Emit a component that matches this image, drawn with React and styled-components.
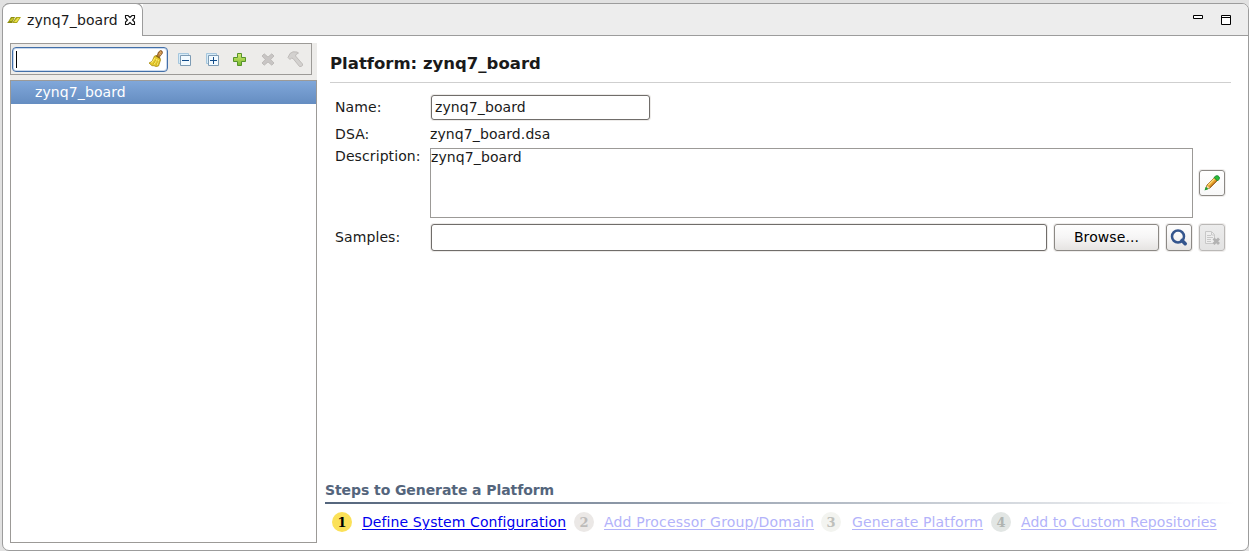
import React from "react";
import styled, { createGlobalStyle, css } from "styled-components";

const Global = createGlobalStyle`
  * { box-sizing: border-box; }
  html, body { margin: 0; padding: 0; overflow: hidden; }
  body { background: #e1e1e1; font-family: "DejaVu Sans", sans-serif; font-size: 14px; letter-spacing: 0.1px; color: #1a1a1a; }
`;

const Window = styled.div`
  width: 1249px; height: 551px; padding: 3px 0 0 2px; background: #e1e1e1;
`;
const Frame = styled.div`
  display: flex; flex-direction: column; width: 1247px; height: 548px;
  border: 1px solid #9c9c9c; border-radius: 7px; background: #fff;
`;
const TabBar = styled.header`display: flex; height: 32px; flex: none;`;
const Tab = styled.div`
  display: flex; align-items: center; width: 140px; height: 33px; margin-top: -1px;
  padding-left: 4px; background: #fff; border: 1px solid #9c9c9c; border-width: 1px 1px 0 0;
  border-radius: 7px 7px 0 0; white-space: nowrap;
  svg { flex: none; }
`;
const TabTitle = styled.span`width: 91px; margin: 0 6px 0 5px; line-height: 20px;`;
const TabFill = styled.div`
  display: flex; flex: 1; justify-content: flex-end; padding: 10px 16px 0 0; gap: 17px;
  background: #ededed; border-bottom: 1px solid #9c9c9c; border-top-right-radius: 6px;
`;
const Body = styled.div`display: flex; flex: 1; min-height: 0;`;

const Side = styled.aside`
  display: flex; flex-direction: column; flex: none; width: 307px; height: 500px;
  margin: 7px 0 0 7px; background: #edecea;
`;
const Toolbar = styled.div`
  display: flex; align-items: center; width: 302px; height: 32px; padding-left: 1px;
  border: 1px solid #9c9a97; margin-bottom: 5px; flex: none;
`;
const Tools = styled.div`
  display: flex; gap: 12px; margin-left: 8px;
  > svg { flex: none; }
  > svg:nth-child(3) { margin: 0 0 0 -1px; }
`;
const Filter = styled.div`
  display: flex; align-items: center; justify-content: space-between; flex: none; width: 156px; height: 25px;
  padding: 0 3px; background: #fff; border: 1px solid #426fa8; border-radius: 4px;
  box-shadow: inset 0 0 0 1px #c9d8ec;
`;
const Caret = styled.span`width: 1px; height: 17px; background: #000;`;
const Tree = styled.div`flex: 1; background: #fff; border: 1px solid #9c9a97;`;
const TreeRow = styled.div`
  height: 23px; padding-left: 24px; line-height: 22px; color: #fff;
  background: linear-gradient(#80a7da, #658dc1);
`;

const Main = styled.main`display: flex; flex-direction: column; flex: 1; padding: 7px 13px 0 8px;`;
const Title = styled.h1`
  height: 40px; margin: 0 4px 12px 5px; padding-top: 11px; border-bottom: 1px solid #cfcfcf;
  font-size: 16.5px; line-height: 20px; font-weight: bold; letter-spacing: 0; color: #1a1a1a;
`;
const Row = styled.div`
  display: flex; align-items: ${(p) => p.$align || "center"}; height: ${(p) => p.$h}px;
  margin: 0 0 ${(p) => p.$gap || 0}px 10px;
`;
const Label = styled.span`
  flex: none; width: 95px; line-height: 16px; padding-bottom: ${(p) => (p.$raised ? 2 : 0)}px;
`;
const Field = styled.div`
  flex: none; width: ${(p) => p.$w}px; height: ${(p) => p.$h}px; margin-left: 1px; padding-left: 3px;
  line-height: ${(p) => p.$h - 3}px; border: 1px solid #706d6a; border-radius: 3px; background: #fff;
  box-shadow: 0 0 0 1px #edebe9;
`;
const TextArea = styled.div`
  flex: none; width: 763px; height: 70px; border: 1px solid #9c9a97; line-height: 17px; background: #fff;
`;
const Button = styled.div`
  display: flex; align-items: center; justify-content: center; flex: none;
  width: ${(p) => p.$w}px; height: ${(p) => p.$h || 27}px; margin-left: ${(p) => p.$ml}px;
  color: #000; border: 1px solid #8c8985; border-radius: 3px;
  background: linear-gradient(#fefefe, #f6f5f5 50%, #e6e4e2);
  box-shadow: 0 0 0 1px #efedec;
  > span { padding-bottom: 2px; line-height: 16px; }
  ${(p) => p.$plain && css`background: linear-gradient(#fff, #f8f8f8); margin-top: 22px;`}
  ${(p) => p.$off && css`background: linear-gradient(#ececec, #e3e3e3); border-color: #bab8b6;`}
`;
const Steps = styled.section`margin-top: auto; height: 69px;`;
const StepsTitle = styled.h2`
  margin: 0; height: 21px; padding-top: 1px; font-size: 14px; line-height: 17px; letter-spacing: -0.08px; color: #54657c;
`;
const Rule = styled.div`height: 2px; background: linear-gradient(to right, #54657c, #fff);`;
const StepList = styled.div`display: flex; align-items: center; height: 20px; margin: 8px 0 0 7px;`;
const Badge = styled.span`
  flex: none; width: 20px; height: 20px; border-radius: 50%; margin-right: ${(p) => p.$mr}px;
  background: ${(p) => p.$bg}; color: ${(p) => p.$fg};
  font: bold 13px/21px "DejaVu Serif", serif; text-align: center;
`;
const Link = styled.a`
  flex: none; width: ${(p) => p.$w}px; margin-right: ${(p) => p.$mr}px; white-space: nowrap;
  letter-spacing: ${(p) => p.$ls}px;
  color: ${(p) => (p.$on ? "#0000ee" : "#b3b3fa")}; text-decoration: underline;
  text-underline-offset: 2px; text-decoration-thickness: 1px; line-height: 20px;
`;

const LogoIcon = () => (
  <svg width="15" height="8" viewBox="0 0 15 8">
    <path d="M4 1h4L5 7H0l1-1z" fill="#8c8c10" />
    <path d="M2 5l3-3h2L5 5z" fill="#c5c52a" />
    <path d="M9 1h5l-4 6H5z" fill="#a9a618" />
    <path d="M7 6l3.500-4h2l-3 4z" fill="#eee34d" />
  </svg>
);
const CloseIcon = () => (
  <svg width="12" height="12" viewBox="0 0 12 12">
    <path d="M1.500 1.500h2.500L6 3.500l2-2h2.500v2.500l-2 2 2 2v2.500H8l-2-2-2 2H1.500V8l2-2-2-2z" fill="#fff" stroke="#111" strokeWidth="1.100" />
  </svg>
);
const MinIcon = () => (
  <svg width="11" height="12" viewBox="0 0 11 12"><path d="M1.500 1.500h9v3h-9z" fill="#fff" stroke="#000" /></svg>
);
const MaxIcon = () => (
  <svg width="12" height="12" viewBox="0 0 12 12"><path d="M1.500 1.500h9v9h-9zM1.500 3.500h9" fill="#fff" stroke="#000" /></svg>
);
const BroomIcon = () => (
  <svg width="16" height="18" viewBox="0 0 16 18">
    <path d="M9 6l1.500-4 2-1.500L14 1l.5 2-1.500 2-2 2.500z" fill="#bd7f3a" stroke="#754515" strokeWidth=".7" />
    <path d="M11 3.500l2 1M12 1.800l1.500 1" stroke="#e8ba74" />
    <path d="M6.500 6l2-.5L12 8l.5 2-2 6-2.500.5-2-.8-2 0L1 13l3-1.500z" fill="#e6ca2b" stroke="#a88b14" strokeWidth=".8" />
    <path d="M7 8l-3.500 5M9 9l-3 5.500M10.500 10L9 15" stroke="#fff17a" />
    <path d="M8 10l-3 4.500M10 11l-2 4.500" stroke="#b99a14" strokeWidth=".6" />
    <path d="M8 5.800l4 2.500" stroke="#886315" strokeWidth="1.300" />
  </svg>
);
const BoxesIcon = ({ plus }) => (
  <svg width="16" height="16" viewBox="0 0 16 16">
    <path d="M2.500 2.500h10v10h-10z" fill="#d7ebf7" stroke="#a5c6dd" />
    <path d="M4.500 4.500h10v10h-10z" fill="#f2faff" stroke="#7d9bb4" />
    <path d="M6 9.500h7" stroke="#124b88" />
    {plus && <path d="M9.500 6v7" stroke="#124b88" />}
  </svg>
);
const PlusIcon = () => (
  <svg width="16" height="16" viewBox="0 0 16 16">
    <defs><linearGradient id="green" x2="0" y2="1"><stop stopColor="#d5eb73" /><stop offset="1" stopColor="#76b72c" /></linearGradient></defs>
    <path d="M6.500 2.500h4v4h4v4h-4v4h-4v-4h-4v-4h4z" fill="url(#green)" stroke="#559329" />
  </svg>
);
const DeleteIcon = () => (
  <svg width="16" height="16" viewBox="0 0 16 16">
    <path d="M3 5l2.200-2.200L9 6l3.800-3.200L15 5l-3.300 3.500L15 12l-2.200 2.200L9 11l-3.800 3.200L3 12l3.300-3.500z" fill="#c8c5c4" stroke="#b8b5b3" strokeWidth=".8" />
  </svg>
);
const HammerIcon = () => (
  <svg width="16" height="16" viewBox="0 0 16 16">
    <path d="M1 6.500l2-4L6 .8l4 .2 1.500 1L9 3.500 8.500 5l7 8v1.500L14 15.500h-1.500L6 7.500 4.500 7 3 8.500z" fill="#d3d1cf" stroke="#bbb8b5" strokeWidth=".9" />
  </svg>
);
const PencilIcon = () => (
  <svg width="16" height="16" viewBox="0 0 16 16">
    <path d="M1.500 14.500L3 10l7.500-7.500 3 3L6 13z" fill="#e9a52f" stroke="#8a5519" strokeWidth=".8" />
    <path d="M4.200 10l6.500-6.500" stroke="#ffda73" strokeWidth="1.200" />
    <path d="M5.800 12l7-7" stroke="#b96c19" />
    <path d="M10 2.500L12 .8h2L15.300 2v2l-1.800 2z" fill="#2bbd3c" stroke="#13802a" strokeWidth=".8" />
    <path d="M3 10.300l2.700 2.600-3.400 1.300z" fill="#f3d9a8" />
    <path d="M1.800 11.800l2.700 2.200L.5 15.600z" fill="#18a132" />
  </svg>
);
const SearchIcon = () => (
  <svg width="18" height="18" viewBox="0 0 18 18">
    <circle cx="8" cy="7.500" r="6" fill="none" stroke="#34558d" strokeWidth="2.500" />
    <path d="M12 11.500l3.200 3.200" stroke="#34558d" strokeWidth="3.600" strokeLinecap="round" />
  </svg>
);
const DocDeleteIcon = () => (
  <svg width="16" height="16" viewBox="0 0 16 16">
    <path d="M1.500 1.500h6l3 3v9h-9z" fill="#eee" stroke="#c8c8c8" />
    <path d="M3 5.500h4M3 7.500h6M3 9.500h4M3 11.500h4M7.500 2v3h3" fill="none" stroke="#c8c8c8" />
    <path d="M9.500 8.500l5.500 5.500M15 8.500L9.500 14" stroke="#b3b3b3" strokeWidth="2.800" />
  </svg>
);

const steps = [
  { text: "Define System Configuration", bg: "#fbe158", fg: "#000", gap: 10, w: 204, mr: 8, ls: 0.09, on: true },
  { text: "Add Processor Group/Domain", bg: "#ebe8e6", fg: "#bdbbb9", gap: 10, w: 210, mr: 7, ls: 0.19 },
  { text: "Generate Platform", bg: "#f3f4f0", fg: "#bfc0bb", gap: 11, w: 131, mr: 8, ls: 0.13 },
  { text: "Add to Custom Repositories", bg: "#e2e6e4", fg: "#b0b4b1", gap: 10, w: 196, mr: 0, ls: 0.06 },
];

export default function App() {
  return (
    <Window>
      <Global />
      <Frame>
        <TabBar>
          <Tab><LogoIcon /><TabTitle>zynq7_board</TabTitle><CloseIcon /></Tab>
          <TabFill><MinIcon /><MaxIcon /></TabFill>
        </TabBar>
        <Body>
          <Side>
            <Toolbar>
              <Filter><Caret /><BroomIcon /></Filter>
              <Tools><BoxesIcon /><BoxesIcon plus /><PlusIcon /><DeleteIcon /><HammerIcon /></Tools>
            </Toolbar>
            <Tree><TreeRow>zynq7_board</TreeRow></Tree>
          </Side>
          <Main>
            <Title>Platform: zynq7_board</Title>
            <Row $h={25} $gap={6}><Label $raised>Name:</Label><Field $w={219} $h={25}>zynq7_board</Field></Row>
            <Row $h={16} $gap={6}><Label>DSA:</Label><span>zynq7_board.dsa</span></Row>
            <Row $h={70} $gap={6} $align="flex-start">
              <Label>Description:</Label><TextArea>zynq7_board</TextArea>
              <Button $w={26} $h={26} $ml={6} $plain><PencilIcon /></Button>
            </Row>
            <Row $h={27}>
              <Label $raised>Samples:</Label><Field $w={616} $h={27} />
              <Button $w={105} $ml={7}><span>Browse...</span></Button>
              <Button $w={26} $ml={7}><SearchIcon /></Button>
              <Button $w={26} $ml={7} $off><DocDeleteIcon /></Button>
            </Row>
            <Steps>
              <StepsTitle>Steps to Generate a Platform</StepsTitle>
              <Rule />
              <StepList>
                {steps.map((s, i) => (
                  <React.Fragment key={s.text}>
                    <Badge $bg={s.bg} $fg={s.fg} $mr={s.gap}>{i + 1}</Badge>
                    <Link $w={s.w} $mr={s.mr} $ls={s.ls} $on={s.on}>{s.text}</Link>
                  </React.Fragment>
                ))}
              </StepList>
            </Steps>
          </Main>
        </Body>
      </Frame>
    </Window>
  );
}
